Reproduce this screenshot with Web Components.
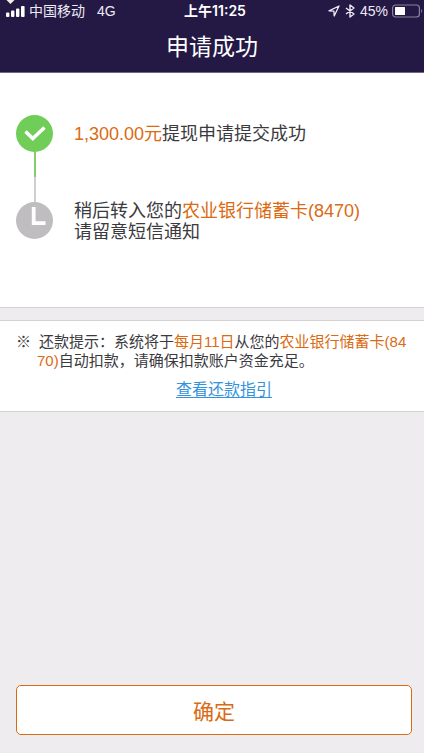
<!DOCTYPE html>
<html lang="zh-CN">
<head>
<meta charset="utf-8">
<meta name="viewport" content="width=device-width, initial-scale=1">
<title>申请成功</title>
<style>
  body {
    margin: 0;
    background: #eeecef;
    color: #3b3a3e;
    font-family: "Liberation Sans", "Noto Sans CJK SC", sans-serif;
    --accent: #db6a12;
    --bar: #231944;
    --line: #d3d1d4;
  }
  em { font-style: normal; color: var(--accent); }
</style>
</head>
<body>
<result-page>
  <status-bar slot="top" carrier="中国移动" network="4G" time="上午11:25" battery="45%"></status-bar>
  <nav-title slot="top">申请成功</nav-title>
  <progress-steps>
    <progress-step state="done"><em>1,300.00元</em>提现申请提交成功</progress-step>
    <progress-step state="pending">稍后转入您的<em>农业银行储蓄卡(8470)</em><br>请留意短信通知</progress-step>
  </progress-steps>
  <repay-note>还款提示：系统将于<em>每月11日</em>从您的<em>农业银行储蓄卡(8470)</em>自动扣款，请确保扣款账户资金充足。<span slot="link">查看还款指引</span></repay-note>
  <confirm-button slot="bottom">确定</confirm-button>
</result-page>

<script>
  const define = (name, html, setup) => {
    const template = document.createElement('template');
    template.innerHTML = html;
    customElements.define(name, class extends HTMLElement {
      constructor() {
        super();
        this.attachShadow({ mode: 'open' }).append(template.content.cloneNode(true));
      }
      connectedCallback() {
        if (setup) setup(this, this.shadowRoot);
      }
    });
  };

  define('result-page', `
    <style>
      :host { display: flex; flex-direction: column; min-height: 100vh; }
      header { background: var(--bar); color: #fff; border-bottom: 1px solid #6f6883; }
      main { flex: 1; display: flex; flex-direction: column; gap: 12px; }
      footer { padding: 16px 12px 18px 16px; }
    </style>
    <header><slot name="top"></slot></header>
    <main><slot></slot></main>
    <footer><slot name="bottom"></slot></footer>`);

  define('status-bar', `
    <style>
      :host { display: grid; grid-template-columns: 1fr auto 1fr; align-items: center; height: 22px; padding: 0 0 0 6px; font-size: 14px; line-height: 22px; color: #eeeaf4; }
      .left, .right { display: flex; align-items: center; }
      .left { gap: 4px; }
      .network { margin-left: 8px; }
      .right { justify-content: flex-end; gap: 4px; }
      .time { font-weight: 600; color: #fff; font-family: Inter, "Noto Sans CJK SC", sans-serif; }
      svg { display: block; flex: none; }
      .notch { position: absolute; left: 6px; top: 0; }
    </style>
    <svg class="notch" width="9" height="4" viewBox="0 0 9 4" aria-hidden="true"><path d="M0.5 0H8.5L4.5 4Z" fill="#f3f2dc"/></svg>
    <div class="left">
      <svg width="19" height="12" viewBox="0 0 19 12" fill="#fff" aria-hidden="true"><rect x="0" y="7.5" width="3.4" height="4.5" rx="1"/><rect x="5" y="5.5" width="3.4" height="6.5" rx="1"/><rect x="10" y="3.5" width="3.4" height="8.5" rx="1"/><rect x="15" y="1" width="3.6" height="11" rx="1"/></svg>
      <span class="carrier"></span><span class="network"></span>
    </div>
    <span class="time"></span>
    <div class="right">
      <svg width="12" height="12" viewBox="0 0 12 12" fill="none" stroke="#eeeaf4" stroke-width="1.3" stroke-linejoin="round" aria-hidden="true"><path d="M1 5.8L11 1L6.2 11L5.9 6.1Z"/></svg>
      <svg width="12" height="14" viewBox="0 0 12 14" fill="none" stroke="#eeeaf4" stroke-width="1.4" stroke-linejoin="round" aria-hidden="true"><path d="M2 4L10 10L6 13V1L10 4L2 10"/></svg>
      <span class="battery"></span>
      <svg width="32" height="14" viewBox="0 0 32 14" aria-hidden="true"><rect x="0.6" y="1" width="26.8" height="12" rx="3" fill="none" stroke="#8a829e" stroke-width="1.2"/><rect x="3" y="3" width="10" height="8" rx="0.5" fill="#fff"/><path d="M29 5Q31 7 29 9Z" fill="#8a829e"/></svg>
    </div>`, (host, root) => {
      for (const key of ['carrier', 'network', 'time', 'battery'])
        root.querySelector('.' + key).textContent = host.getAttribute(key);
    });

  define('nav-title', `
    <style>
      :host { display: block; }
      h1 { margin: 0; font-size: 23px; font-weight: 400; line-height: 50px; text-align: center; }
    </style>
    <h1><slot></slot></h1>`);

  define('progress-steps', `
    <style>
      :host { display: flex; flex-direction: column; background: #fff; padding: 42px 16px 68px; border-bottom: 1px solid var(--line); }
      .link { width: 2px; height: 50px; margin-left: 18px; background: linear-gradient(#86cd70 50%, #d0ced1 50%); }
    </style>
    <slot></slot>`, (host, root) => {
      /* Each step after the first is joined to the one above by a rule. */
      const steps = [...host.children];
      root.querySelector('slot').remove();
      steps.forEach((step, i) => {
        if (i) {
          const link = document.createElement('div');
          link.className = 'link';
          root.append(link);
        }
        const slot = document.createElement('slot');
        slot.name = step.slot = 'step-' + i;
        root.append(slot);
      });
    });

  define('progress-step', `
    <style>
      :host { display: flex; align-items: center; gap: 21px; height: 37px; font-size: 18px; line-height: 21px; }
      svg { display: none; flex: none; }
      :host([state="done"]) .done, :host([state="pending"]) .pending { display: block; }
      p { margin: 0; padding-top: 2px; }
    </style>
    <svg class="done" width="37" height="37" viewBox="0 0 37 37" aria-hidden="true"><circle cx="18.5" cy="18.5" r="18.5" fill="#70cd58"/><path d="M9.5 16.5L16.8 23.5L28.5 12.5" fill="none" stroke="#fff" stroke-width="3.6"/></svg>
    <svg class="pending" width="37" height="37" viewBox="0 0 37 37" aria-hidden="true"><circle cx="18.5" cy="18.5" r="18.5" fill="#bfbdc0"/><path d="M17.7 5V21.2H29.5" fill="none" stroke="#fff" stroke-width="3.8"/></svg>
    <p><slot></slot></p>`);

  define('repay-note', `
    <style>
      :host { display: block; background: #fff; border: solid var(--line); border-width: 1px 0; padding: 11px 16px 10px; }
      p { margin: 0; padding-left: 21px; font-size: 15px; line-height: 19px; text-indent: -21px; word-break: break-all; }
      .mark { display: inline-block; width: 23px; text-indent: 0; }
      nav { margin-top: 9px; padding-left: 24px; text-align: center; font-size: 16px; line-height: 22px; }
      a { color: #3493dc; text-underline-offset: 2px; }
    </style>
    <p><span class="mark">※</span><slot></slot></p>
    <nav><a href="#guide"><slot name="link"></slot></a></nav>`);

  define('confirm-button', `
    <style>
      :host { display: block; }
      button { display: block; width: 100%; height: 50px; padding: 0; background: #fff; border: 1px solid var(--accent); border-radius: 5px; color: var(--accent); font: inherit; font-size: 21px; }
    </style>
    <button type="button"><slot></slot></button>`);
</script>
</body>
</html>
